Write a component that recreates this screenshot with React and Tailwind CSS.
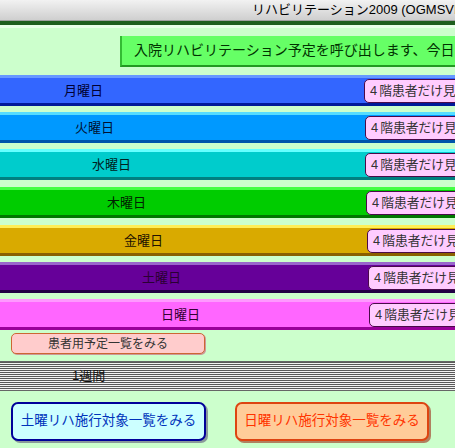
const FONT = "font-['Liberation_Sans','Noto_Sans_CJK_JP',sans-serif]"

const days = [
  { label: '月曜日', top: 'mt-[8px]', pad: 'pl-[64px]', btn: 'ml-[364px]', cls: 'bg-[#3366ff] border-t-[#6699ff] border-b-[#001a99]', text: 'text-[#000033]' },
  { label: '火曜日', top: 'mt-[6px]', pad: 'pl-[75px]', btn: 'ml-[365px]', cls: 'bg-[#0099ff] border-t-[#55ddff] border-b-[#0055aa]', text: 'text-[#001133]' },
  { label: '水曜日', top: 'mt-[6px]', pad: 'pl-[92px]', btn: 'ml-[365px]', cls: 'bg-[#00cccc] border-t-[#66ffff] border-b-[#008080]', text: 'text-[#002222]' },
  { label: '木曜日', top: 'mt-[7px]', pad: 'pl-[107px]', btn: 'ml-[366px]', cls: 'bg-[#00cc00] border-t-[#44ff44] border-b-[#007700]', text: 'text-[#002200]' },
  { label: '金曜日', top: 'mt-[7px]', pad: 'pl-[124px]', btn: 'ml-[367px]', cls: 'bg-[#d9aa00] border-t-[#ffee55] border-b-[#8a6000]', text: 'text-[#221100]' },
  { label: '土曜日', top: 'mt-[6px]', pad: 'pl-[142px]', btn: 'ml-[368px]', cls: 'bg-[#660099] border-t-[#9966cc] border-b-[#220044]', text: 'text-[#2a0033]' },
  { label: '日曜日', top: 'mt-[6px]', pad: 'pl-[161px]', btn: 'ml-[369px]', cls: 'bg-[#ff66ff] border-t-[#ff99ff] border-b-[#990099]', text: 'text-[#330033]' },
]

function DayBar ({ day }) {
  return (
    <div className={`${day.top} h-[31px] border-t-[3px] border-b-[3px] ${day.cls} flex items-center relative`}>
      <span className={`absolute ${day.pad} text-[13px] leading-none ${day.text}`}>{day.label}</span>
      <div className={`${day.btn} shrink-0 h-[24px] w-[120px] rounded-[5px] border border-[#4a0a4a] bg-[#ffccff] flex items-center pl-[5px] text-[12.8px] text-[#333] whitespace-nowrap`}>
        <span className="mr-[2px]">4</span>階患者だけ見る
      </div>
    </div>
  )
}

export default function App () {
  return (
    <div className={`w-[455px] h-[448px] overflow-hidden bg-[#ccffcc] ${FONT}`}>
      <div className="h-[21px] bg-gradient-to-b from-[#f2f2f2] to-[#cfcfcf] border-b border-[#a0a0a0] flex items-center pl-[252px] whitespace-nowrap text-[13px] text-black">
        リハビリテーション2009 (OGMSVR)
      </div>
      <div className="h-[4px] bg-[#1d5e1d]" />
      <div className="h-[3px] bg-[#e8ffe8]" />

      <div className="mt-[8px] ml-[120px] h-[31px] w-[360px] bg-[#66ff66] border-l-2 border-b-2 border-l-[#33bb33] border-b-[#229922] flex items-center pl-[12px] whitespace-nowrap text-[14px] text-[#003300]">
        入院リハビリテーション予定を呼び出します、今日の予定
      </div>

      {days.map((d) => <DayBar key={d.label} day={d} />)}

      <div className="mt-[3px] ml-[11px] w-[194px] h-[21px] rounded-[5px] border border-[#cc6633] bg-[#ffcccc] flex items-center justify-center text-[12px] text-[#333] shadow-[1px_1px_0_#cc9999]">
        患者用予定一覧をみる
      </div>

      <div className="mt-[7px] h-[30px] border-y border-[#666] bg-[repeating-linear-gradient(to_bottom,#5a5a5a_0px,#5a5a5a_1px,#f4f4f4_1px,#f4f4f4_2px)] flex items-center pl-[72px] text-[13px] text-[#111]">
        1週間
      </div>

      <div className="mt-[11px] flex">
        <div className="ml-[11px] w-[195px] h-[39px] rounded-[7px] border-2 border-[#000099] bg-[#ccffff] shadow-[2px_2px_0_#8a9a9a] flex items-center justify-center text-[13.5px] text-[#0033bb] whitespace-nowrap">
          土曜リハ施行対象一覧をみる
        </div>
        <div className="ml-[29px] w-[194px] h-[39px] rounded-[7px] border-2 border-[#dd4411] bg-[#ffcc99] shadow-[2px_2px_0_#b08060] flex items-center justify-center text-[13.5px] text-[#ff3300] whitespace-nowrap">
          日曜リハ施行対象一覧をみる
        </div>
      </div>
    </div>
  )
}
